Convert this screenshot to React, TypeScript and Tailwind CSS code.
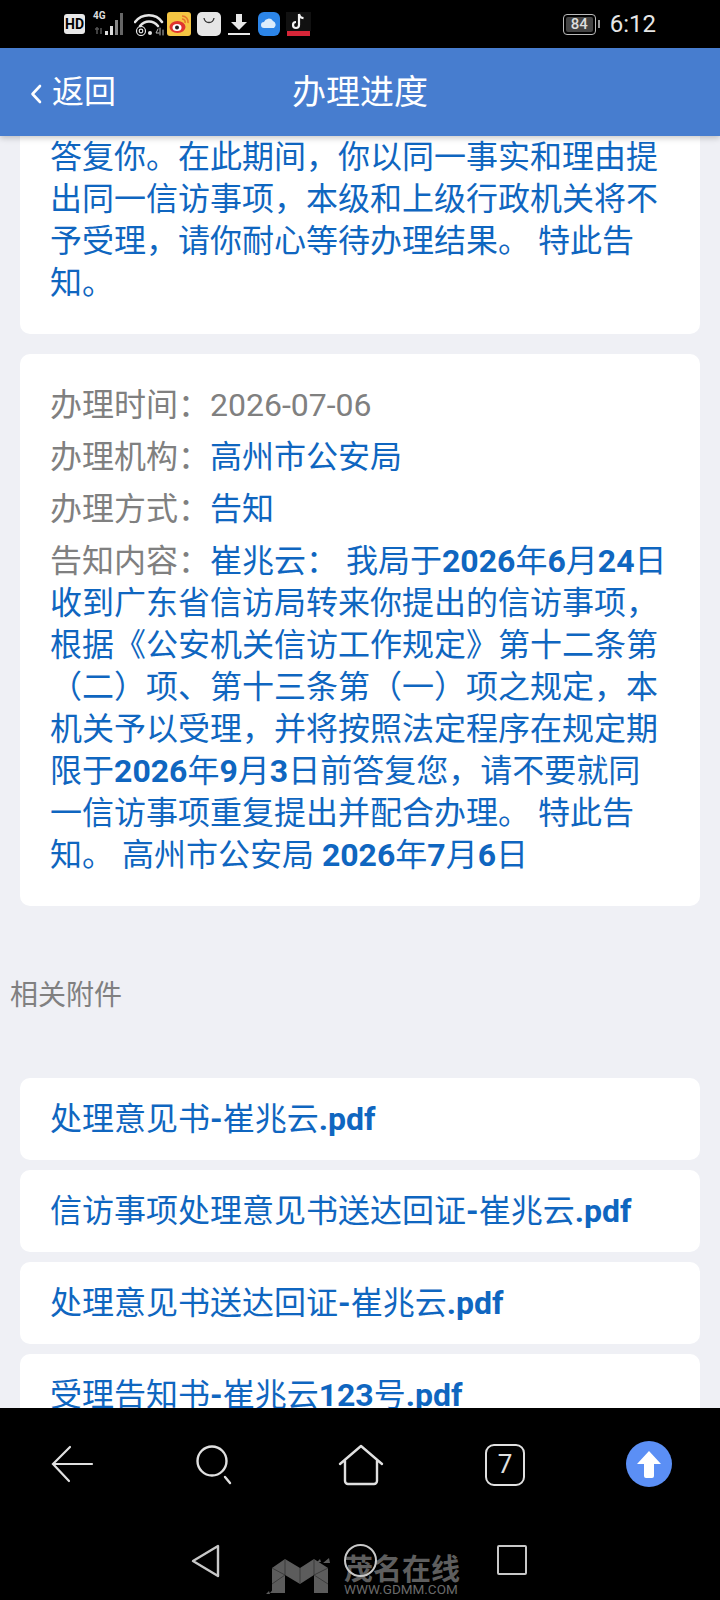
const blue = 'text-[#0f66c0]';

function B({ children }: { children: React.ReactNode }) {
  return <b className="font-bold">{children}</b>;
}

function StatusIcons() {
  return (
    <div className="flex items-center">
      <div className="w-[21px] h-[20px] rounded-[3px] bg-[#e8e8e8] text-black text-[14px] font-bold leading-[20px] text-center">HD</div>
      <div className="relative ml-[8px] w-[35px] h-[24px]">
        <span className="absolute left-0 top-[-2px] text-[10px] leading-[12px] font-bold text-[#ddd]">4G</span>
        <svg width="35" height="24" viewBox="0 0 35 24" className="absolute left-0 top-0">
          <path d="M2 17h4M4 15v7M8 16v6" stroke="#555" strokeWidth="1.5" fill="none" />
          <rect x="12" y="19" width="3" height="4" fill="#ddd" />
          <rect x="17" y="14" width="3" height="9" fill="#ddd" />
          <rect x="22" y="8" width="3" height="15" fill="#888" />
          <rect x="27" y="1" width="3" height="22" fill="#666" />
        </svg>
      </div>
      <svg width="32" height="24" viewBox="0 0 32 24" className="ml-[6px]" fill="none" stroke="#e5e5e5" strokeLinecap="round">
        <path d="M1 10C8 1 22 1 28 10" strokeWidth="2.6" />
        <path d="M6 14C11 8 19 8 24 14" strokeWidth="2.6" />
        <circle cx="7" cy="19" r="4.5" strokeWidth="1.2" />
        <circle cx="7" cy="19" r="1.8" strokeWidth="1.2" />
        <circle cx="16" cy="21" r="2" fill="#e5e5e5" stroke="none" />
        <path d="M24 17l-2 4h3M26 16v7M29 18v5" strokeWidth="1" stroke="#bbb" />
      </svg>
      <svg width="24" height="24" viewBox="0 0 24 24" className="ml-[1px]">
        <rect width="24" height="24" rx="3" fill="#f5c543" />
        <ellipse cx="10.5" cy="15" rx="8" ry="6" fill="#e0342f" />
        <ellipse cx="10" cy="15.5" rx="4.5" ry="3.5" fill="#fff" />
        <circle cx="10" cy="15.5" r="2" fill="#222" />
        <path d="M15 4a6 6 0 0 1 6 7M15 7a3 3 0 0 1 3 4" stroke="#e8752a" strokeWidth="1.6" fill="none" />
      </svg>
      <svg width="24" height="24" viewBox="0 0 24 24" className="ml-[6px]">
        <rect width="24" height="24" rx="5" fill="#e6e6e6" />
        <path d="M7 6c1 6 9 6 10 0" stroke="#333" strokeWidth="1.3" fill="none" />
      </svg>
      <svg width="22" height="24" viewBox="0 0 22 24" className="ml-[7px]">
        <path d="M8 2h6v8h5l-8 8-8-8h5z" fill="#e8e8e8" />
        <rect y="21" width="22" height="2" fill="#e8e8e8" />
      </svg>
      <svg width="22" height="24" viewBox="0 0 22 24" className="ml-[8px]">
        <rect width="22" height="24" rx="6" fill="#2c85e8" />
        <path d="M6 16a3 3 0 0 1 0-6 5 5 0 0 1 9-1 4 4 0 0 1 1 7z" fill="#dcecfb" />
      </svg>
      <svg width="25" height="24" viewBox="0 0 25 24" className="ml-[6px]">
        <rect width="25" height="19" fill="#111" />
        <path d="M13 2v11a3 3 0 1 1-3-3M13 2c.5 2.500 2 4 4.500 4.200" stroke="#f4f4f4" strokeWidth="2.200" fill="none" />
        <rect x="1" y="19" width="23" height="5" fill="#d62638" />
      </svg>
    </div>
  );
}

function StatusBar() {
  return (
    <div className="h-[48px] shrink-0 bg-black flex items-center justify-between pl-[64px] pr-[64px] relative">
      <StatusIcons />
      <div className="flex items-center">
        <div className="w-[33px] h-[21px] rounded-[4px] border border-[#bbb] p-[2px] flex">
          <div className="flex-1 bg-[#444] rounded-[2px] text-[#ddd] text-[15px] font-medium leading-[15px] text-center">84</div>
        </div>
        <div className="w-[2px] h-[8px] bg-[#999] ml-[2px]" />
        <span className="ml-[10px] text-[24px] leading-none text-[#e6e6e6]">6:12</span>
      </div>
    </div>
  );
}

function Header() {
  return (
    <div className="h-[88px] shrink-0 bg-[#477dcf] text-white flex items-center justify-center relative z-10 shadow-[0_2px_6px_rgba(0,0,0,0.22)]">
      <div className="absolute left-[30px] top-0 h-full flex items-center">
        <svg width="12" height="20" viewBox="0 0 12 20" fill="none" stroke="#fff" strokeWidth="2.6" strokeLinecap="round" strokeLinejoin="round" className="mt-[3px]">
          <path d="M10 2L2.500 10l7.500 8" />
        </svg>
        <span className="text-[32px] ml-[10px]">返回</span>
      </div>
      <span className="text-[34px]">办理进度</span>
    </div>
  );
}

function Row({ label, value, tone = blue }: { label: string; value: string; tone?: string }) {
  return (
    <div className="h-[52px] leading-[52px] whitespace-nowrap">
      <span className="text-[#808080]">{label}</span>
      <span className={tone}>{value}</span>
    </div>
  );
}

function Attachment({ children }: { children: React.ReactNode }) {
  return (
    <div className={`h-[82px] shrink-0 bg-white rounded-[10px] px-[30px] flex items-center text-[32px] ${blue}`}>
      <span>{children}</span>
    </div>
  );
}

function Watermark() {
  return (
    <div className="absolute z-20 left-[271px] top-[1558px] flex items-start pointer-events-none">
      <svg width="58" height="36" viewBox="0 0 58 36" className="overflow-visible">
        <path d="M1 10L14 1l15 9L43 1l14 9v25H43V17l-14 9-15-9v18H1z" fill="#5c5c5c" />
        <path d="M1 10l13 7M14 1v16M29 10v16M43 1v16M57 10L43 17M1 26l13-9M43 17l14 9" stroke="#333" strokeWidth="0.8" fill="none" />
        <path d="M52 5l6-5 1 5zM46 4l3-3 1 3zM-1 35l4-5 2 5zM-5 36l3-3 1 3z" fill="#5c5c5c" />
      </svg>
      <div className="ml-[15px] w-[118px]">
        <div className="text-[#5e5e5e] text-[29px] leading-[25px] font-bold whitespace-nowrap">茂名在线</div>
        <div className="text-[#6a6a6a] text-[13.500px] leading-[13px] whitespace-nowrap">WWW.GDMM.COM</div>
      </div>
    </div>
  );
}

function BottomNav() {
  return (
    <div className="h-[192px] shrink-0 bg-black relative">
      <div className="h-[96px] pt-[36px] flex justify-between items-start pl-[50px] pr-[48px]">
        <svg width="44" height="40" viewBox="0 0 44 40" fill="none" stroke="#e0e0e0" strokeWidth="2.2" strokeLinecap="round">
          <path d="M4 20h38M20 3L3 20l16 17" />
        </svg>
        <svg width="42" height="42" viewBox="0 0 42 42" fill="none" stroke="#e0e0e0" strokeWidth="2.4" strokeLinecap="round">
          <circle cx="17" cy="17" r="14.500" />
          <path d="M30 33l5 6" />
        </svg>
        <svg width="46" height="42" viewBox="0 0 46 42" fill="none" stroke="#e0e0e0" strokeWidth="2.4" strokeLinecap="round" strokeLinejoin="round">
          <path d="M2 20L23 2l21 18M7 17v20a3 3 0 0 0 3 3h26a3 3 0 0 0 3-3V17" />
        </svg>
        <div className="w-[40px] h-[42px] border-[2.4px] border-[#e0e0e0] rounded-[9px] text-[#e0e0e0] text-[26px] leading-[37px] text-center">7</div>
        <div className="w-[46px] h-[46px] -mt-[3px] rounded-full bg-[#5b8ff5] flex items-center justify-center">
          <svg width="26" height="30" viewBox="0 0 26 30">
            <path d="M13 2L25 15h-7v12a2 2 0 0 1-2 2h-6a2 2 0 0 1-2-2V15H1z" fill="#fff" />
          </svg>
        </div>
      </div>
      <div className="flex items-start pt-[40px] pl-[191px]">
        <svg width="30" height="34" viewBox="0 0 30 34" fill="none" stroke="#c8c8c8" strokeWidth="2.4" strokeLinejoin="round">
          <path d="M27 2v30L2 17z" />
        </svg>
        <div className="relative z-30 ml-[123px] w-[33px] h-[33px] rounded-full border-[2.4px] border-[#c8c8c8]" />
        <div className="ml-[120px] w-[30px] h-[30px] mt-[1px] rounded-[2px] border-[2.4px] border-[#c8c8c8]" />
      </div>
    </div>
  );
}

export default function App() {
  return (
    <div className="relative w-[720px] h-[1600px] overflow-hidden flex flex-col bg-[#eff0f5] font-['Roboto','Noto_Sans_CJK_SC',sans-serif]">
      <StatusBar />
      <Header />
      <div className="flex-1 min-h-0 overflow-hidden flex flex-col px-[20px]">
        <div className={`shrink-0 bg-white rounded-b-[10px] pl-[30px] pr-[31px] pb-[30px] text-[32px] leading-[42px] ${blue}`}>
          答复你。在此期间，你以同一事实和理由提出同一信访事项，本级和上级行政机关将不予受理，请你耐心等待办理结果。 特此告知。
        </div>
        <div className="shrink-0 mt-[20px] bg-white rounded-[10px] pl-[30px] pr-[31px] pt-[25px] pb-[30px] text-[32px]">
          <Row label="办理时间：" value="2026-07-06" tone="text-[#808080]" />
          <Row label="办理机构：" value="高州市公安局" />
          <Row label="办理方式：" value="告知" />
          <div className={`leading-[42px] mt-[5px] ${blue}`}>
            <span className="text-[#808080]">告知内容：</span>
            崔兆云： 我局于<B>2026</B>年<B>6</B>月<B>24</B>日收到广东省信访局转来你提出的信访事项，根据《公安机关信访工作规定》第十二条第（二）项、第十三条第（一）项之规定，本机关予以受理，并将按照法定程序在规定期限于<B>2026</B>年<B>9</B>月<B>3</B>日前答复您，请不要就同一信访事项重复提出并配合办理。 特此告知。 高州市公安局 <B>2026</B>年<B>7</B>月<B>6</B>日
          </div>
        </div>
        <div className="shrink-0 -mx-[10px] mt-[70px] mb-[62px] text-[28px] leading-[40px] text-[#808080]">相关附件</div>
        <div className="flex flex-col gap-[10px]">
          <Attachment>处理意见书<B>-</B>崔兆云<B>.pdf</B></Attachment>
          <Attachment>信访事项处理意见书送达回证<B>-</B>崔兆云<B>.pdf</B></Attachment>
          <Attachment>处理意见书送达回证<B>-</B>崔兆云<B>.pdf</B></Attachment>
          <Attachment>受理告知书<B>-</B>崔兆云<B>123</B>号<B>.pdf</B></Attachment>
        </div>
      </div>
      <BottomNav />
      <Watermark />
    </div>
  );
}
